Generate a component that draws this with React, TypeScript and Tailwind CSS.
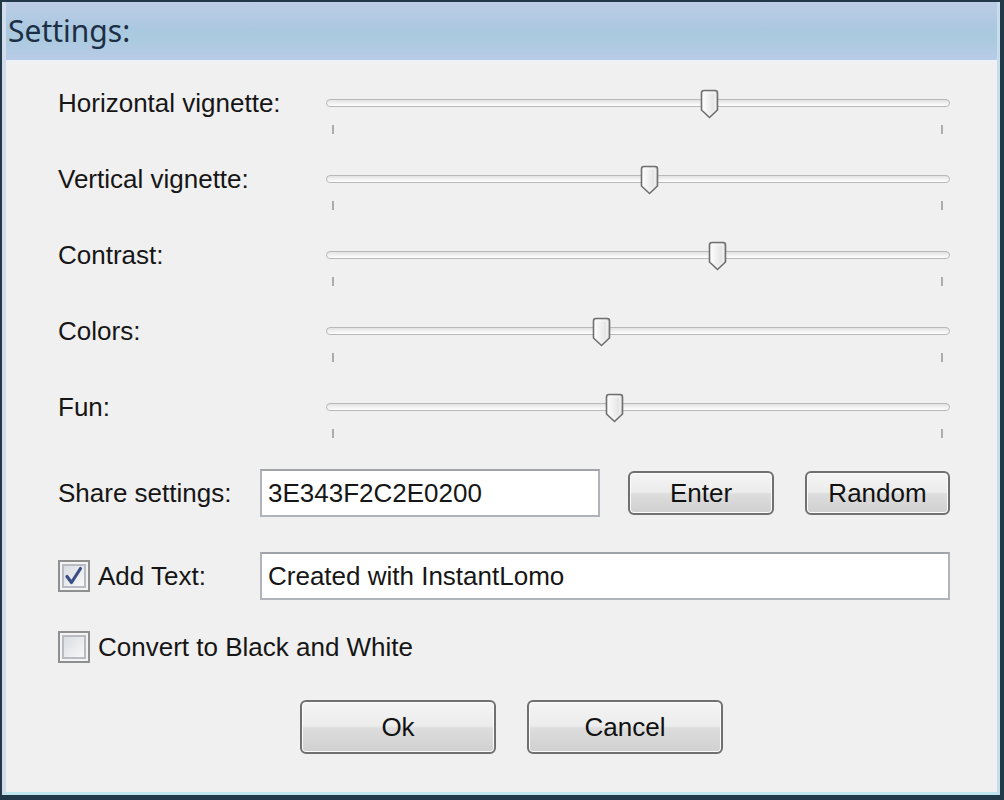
import React from 'react'

const sliders = [
  { label: 'Horizontal vignette:', pos: 383 },
  { label: 'Vertical vignette:', pos: 323 },
  { label: 'Contrast:', pos: 391 },
  { label: 'Colors:', pos: 275 },
  { label: 'Fun:', pos: 288 },
]

function Thumb() {
  return (
    <svg width="19" height="30" viewBox="0 0 19 30">
      <defs>
        <linearGradient id="thumbFill" x1="0" y1="0" x2="1" y2="0">
          <stop offset="0" stopColor="#ffffff" />
          <stop offset="1" stopColor="#dcdcdc" />
        </linearGradient>
      </defs>
      <path
        d="M4 1.5 H15 Q17.5 1.5 17.5 4 V21 L9.5 28.5 L1.5 21 V4 Q1.5 1.5 4 1.5 Z"
        fill="url(#thumbFill)"
        stroke="#6f6f6f"
        strokeWidth="1.6"
      />
      <path d="M4 4 H15 V20.5 L9.5 26 L4 20.5 Z" fill="none" stroke="#f8f8f8" strokeWidth="1" />
    </svg>
  )
}

function Slider({ pos }: { pos: number }) {
  return (
    <div className="relative h-[76px] w-[624px]">
      {/* track */}
      <div className="absolute left-0 right-0 top-[34px] h-[8px] rounded-full border border-[#b8b8b8] bg-[linear-gradient(to_bottom,#e2e2e2,#ffffff)]" />
      {/* ticks */}
      <div className="absolute left-[6px] top-[60px] h-[9px] w-[2px] bg-[#acacac]" />
      <div className="absolute right-[7px] top-[60px] h-[9px] w-[2px] bg-[#acacac]" />
      {/* thumb */}
      <div className="absolute top-[24px]" style={{ left: pos - 9 }}>
        <Thumb />
      </div>
    </div>
  )
}

function Button({ children, className }: { children: React.ReactNode; className?: string }) {
  return (
    <button
      className={
        'rounded-[6px] border-2 border-[#707070] bg-[linear-gradient(to_bottom,#f4f4f4_0%,#ececec_48%,#dddddd_52%,#d0d0d0_100%)] text-[26px] leading-none text-[#111] shadow-[inset_0_0_0_1px_#fbfbfb] ' +
        (className ?? '')
      }
    >
      {children}
    </button>
  )
}

function Checkbox({ checked }: { checked?: boolean }) {
  return (
    <div className="flex h-[32px] w-[32px] items-center justify-center border-2 border-[#8e8f8f] bg-[#f4f4f4]">
      <div className="flex h-[24px] w-[24px] items-center justify-center border-2 border-[#b8bcc2] bg-[linear-gradient(135deg,#d9dde2,#f8f8f8)]">
        {checked && (
          <svg width="20" height="20" viewBox="0 0 20 20">
            <path d="M3 10.5 L7.5 16.5 L16.5 2.5" fill="none" stroke="#3a4f85" strokeWidth="3.2" strokeLinecap="round" strokeLinejoin="round" />
          </svg>
        )}
      </div>
    </div>
  )
}

export default function App() {
  return (
    <div className="h-[800px] w-[1004px] overflow-hidden bg-[#22394a] pb-[5px] pl-[2px] pr-[4px] pt-[2px] font-['Liberation_Sans',Arial,sans-serif]">
      <div className="flex h-full flex-col border-b-[3px] border-l-[4px] border-r-[3px] border-[#c8dcec] border-l-[#d3dcea] border-b-[#bfe6ee] bg-[#f0f0f0]">
        {/* Header */}
        <div className="flex h-[60px] shrink-0 items-center border-b-2 border-[#eef3fa] bg-[linear-gradient(to_bottom,#bccde7,#abc8e0_45%,#a9cadf_60%,#b9cbe7)] pl-[2px]">
          <span className="font-['Noto_Sans','Open_Sans',sans-serif] text-[30px] leading-none text-[#1d2f44]">Settings:</span>
        </div>

        {/* Body */}
        <div className="flex flex-col pl-[52px] pt-[3px] text-[26px] text-[#161616]">
          {sliders.map((s) => (
            <div key={s.label} className="flex h-[76px]">
              <div className="flex h-[76px] w-[268px] items-start pt-[23px] leading-[30px]">{s.label}</div>
              <Slider pos={s.pos} />
            </div>
          ))}

          {/* Share settings */}
          <div className="mt-[24px] flex h-[48px] items-center">
            <div className="w-[202px] leading-[30px]">Share settings:</div>
            <div className="flex h-[48px] w-[340px] items-center border-2 border-[#b0b3b9] border-t-[#a0a3a9] bg-white pl-[6px] leading-none">
              3E343F2C2E0200
            </div>
            <Button className="ml-[28px] h-[44px] w-[146px]">Enter</Button>
            <Button className="ml-[31px] h-[44px] w-[145px]">Random</Button>
          </div>

          {/* Add text */}
          <div className="mt-[35px] flex h-[48px] items-center">
            <Checkbox checked />
            <div className="ml-[8px] w-[162px] leading-[30px]">Add Text:</div>
            <div className="flex h-[48px] w-[690px] items-center border-2 border-[#b0b3b9] border-t-[#a0a3a9] bg-white pl-[6px] leading-none">
              Created with InstantLomo
            </div>
          </div>

          {/* Convert */}
          <div className="mt-[31px] flex h-[32px] items-center">
            <Checkbox />
            <div className="ml-[8px] leading-[30px]">Convert to Black and White</div>
          </div>

          {/* Buttons */}
          <div className="mt-[37px] flex pl-[242px]">
            <Button className="h-[54px] w-[196px]">Ok</Button>
            <Button className="ml-[31px] h-[54px] w-[196px]">Cancel</Button>
          </div>
        </div>
      </div>
    </div>
  )
}
